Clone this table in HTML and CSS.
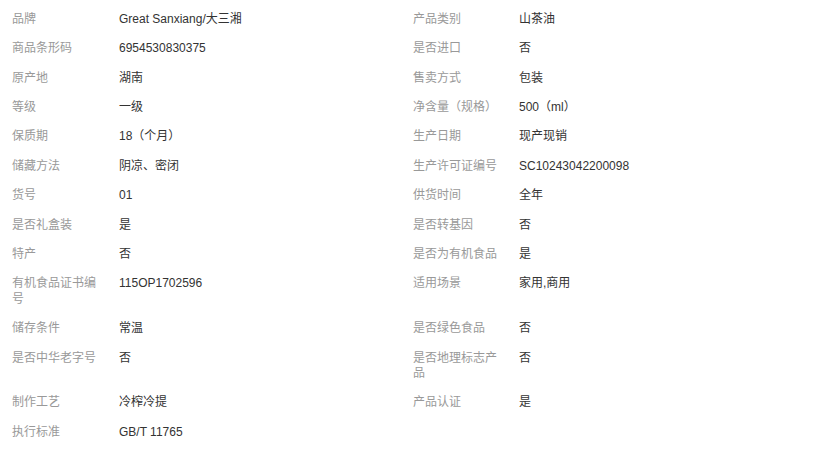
FILE: index.html
```html
<!DOCTYPE html>
<html lang="zh">
<head>
<meta charset="utf-8">
<link rel="stylesheet" href="styles.css">
</head>
<body>
<ul class="attrs">
  <li class="attr"><span class="label">品牌</span><span class="value">Great Sanxiang/大三湘</span></li>
  <li class="attr"><span class="label">产品类别</span><span class="value">山茶油</span></li>
  <li class="attr"><span class="label">商品条形码</span><span class="value">6954530830375</span></li>
  <li class="attr"><span class="label">是否进口</span><span class="value">否</span></li>
  <li class="attr"><span class="label">原产地</span><span class="value">湖南</span></li>
  <li class="attr"><span class="label">售卖方式</span><span class="value">包装</span></li>
  <li class="attr"><span class="label">等级</span><span class="value">一级</span></li>
  <li class="attr"><span class="label">净含量（规格）</span><span class="value">500（ml）</span></li>
  <li class="attr"><span class="label">保质期</span><span class="value">18（个月）</span></li>
  <li class="attr"><span class="label">生产日期</span><span class="value">现产现销</span></li>
  <li class="attr"><span class="label">储藏方法</span><span class="value">阴凉、密闭</span></li>
  <li class="attr"><span class="label">生产许可证编号</span><span class="value">SC10243042200098</span></li>
  <li class="attr"><span class="label">货号</span><span class="value">01</span></li>
  <li class="attr"><span class="label">供货时间</span><span class="value">全年</span></li>
  <li class="attr"><span class="label">是否礼盒装</span><span class="value">是</span></li>
  <li class="attr"><span class="label">是否转基因</span><span class="value">否</span></li>
  <li class="attr"><span class="label">特产</span><span class="value">否</span></li>
  <li class="attr"><span class="label">是否为有机食品</span><span class="value">是</span></li>
  <li class="attr"><span class="label">有机食品证书编号</span><span class="value">115OP1702596</span></li>
  <li class="attr"><span class="label">适用场景</span><span class="value">家用,商用</span></li>
  <li class="attr"><span class="label">储存条件</span><span class="value">常温</span></li>
  <li class="attr"><span class="label">是否绿色食品</span><span class="value">否</span></li>
  <li class="attr"><span class="label">是否中华老字号</span><span class="value">否</span></li>
  <li class="attr"><span class="label">是否地理标志产品</span><span class="value">否</span></li>
  <li class="attr"><span class="label">制作工艺</span><span class="value">冷榨冷提</span></li>
  <li class="attr"><span class="label">产品认证</span><span class="value">是</span></li>
  <li class="attr"><span class="label">执行标准</span><span class="value">GB/T 11765</span></li>
</ul>
</body>
</html>
```

FILE: styles.css
```css
html, body {
  margin: 0;
  padding: 0;
  background: #fff;
}

body {
  font-family: "Liberation Sans", Arial, "Noto Sans CJK SC", sans-serif;
  font-size: 12px;
  line-height: 15.5px;
}

.attrs {
  list-style: none;
  margin: 0;
  padding: 5px 0 0 12px;
  display: grid;
  grid-template-columns: 401px 400px;
}

.attr {
  display: flex;
  padding: 6.95px 0;
}

.label {
  flex: 0 0 95px;
  margin-right: 11px;
  color: #999;
}

.attr:nth-child(odd) .label {
  margin-right: 12px;
}

.value {
  flex: 1;
  color: #333;
}
```
